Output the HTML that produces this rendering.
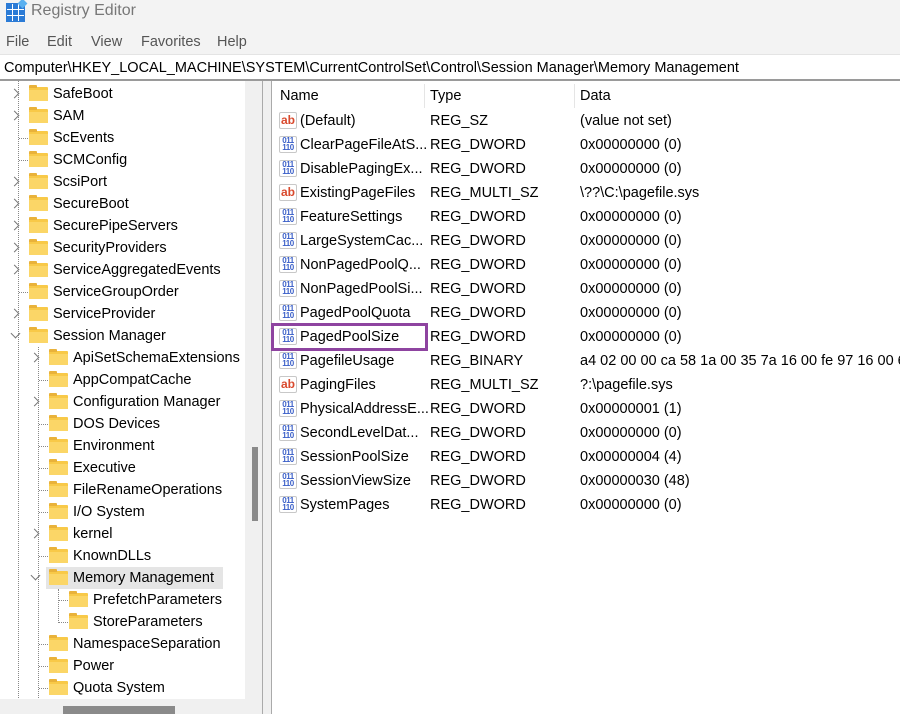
<!DOCTYPE html>
<html><head><meta charset="utf-8"><style>
*{margin:0;padding:0;box-sizing:border-box}
body{width:900px;height:714px;overflow:hidden;background:#fff;font-family:"Liberation Sans",sans-serif;font-size:14.5px;color:#000;position:relative}
.a{position:absolute;white-space:nowrap}
.title{left:0;top:0;width:900px;height:28px;background:#f3f3f3}
.menu{left:0;top:28px;width:900px;height:26px;background:#f3f3f3}
.addr{left:0;top:54px;width:900px;height:25px;background:#fff;border-top:1px solid #e4e4e4}
.fold{position:absolute;width:19px;height:14px;background:#f8c948;border-radius:1px}
.fold:before{content:"";position:absolute;left:0;top:-2px;width:8px;height:3px;background:#e9b23a;border-radius:1px 1px 0 0}
.fold:after{content:"";position:absolute;left:0;top:3px;width:19px;height:11px;background:#fbd667}
.chev{position:absolute;width:7px;height:7px;border-right:1.5px solid #777;border-bottom:1.5px solid #777;transform:rotate(-45deg)}
.chevd{transform:rotate(45deg)}
.ic{position:absolute;width:18px;height:17px;border:1px solid #c8c8c8;border-radius:2px;background:#fff}
.ab{color:#d94a2e;font-weight:bold;font-size:12px;line-height:14px;text-align:center}
.bin{color:#3a5fc8;font-weight:bold;font-size:8px;line-height:7px;text-align:center;padding-top:0;letter-spacing:-0.5px}
.dv{position:absolute;border-left:1px dotted #888}
.dh{position:absolute;border-top:1px dotted #888;height:0}
</style></head><body>
<div class="a title"></div>
<div class="a" style="left:6px;top:3px;width:19px;height:19px;background:#2b7bd6"></div>
<div class="a" style="left:7px;top:4px;width:17px;height:17px;background:linear-gradient(90deg,transparent 5px,#fff 5px,#fff 6px,transparent 6px,transparent 11px,#fff 11px,#fff 12px,transparent 12px),linear-gradient(0deg,transparent 5px,#fff 5px,#fff 6px,transparent 6px,transparent 11px,#fff 11px,#fff 12px,transparent 12px)"></div>
<div class="a" style="left:19px;top:0;width:7px;height:7px;background:#5ab0f0;transform:rotate(45deg)"></div>
<div class="a" style="left:31px;top:2px;font-size:16px;color:#777">Registry Editor</div>
<div class="a menu"></div>
<div class="a" style="left:6px;top:34px;color:#555">File</div>
<div class="a" style="left:47px;top:34px;color:#555">Edit</div>
<div class="a" style="left:91px;top:34px;color:#555">View</div>
<div class="a" style="left:141px;top:34px;color:#555">Favorites</div>
<div class="a" style="left:217px;top:34px;color:#555">Help</div>
<div class="a addr"></div>
<div class="a" style="left:4px;top:60px">Computer\HKEY_LOCAL_MACHINE\SYSTEM\CurrentControlSet\Control\Session Manager\Memory Management</div>
<div class="a" style="left:0;top:79px;width:900px;height:2px;background:#9a9a9a"></div>
<div class="a" style="left:245px;top:81px;width:17px;height:633px;background:#f0f0f0"></div>
<div class="a" style="left:252px;top:447px;width:6px;height:74px;background:#8a8a8a"></div>
<div class="a" style="left:0;top:699px;width:245px;height:15px;background:#f0f0f0"></div>
<div class="a" style="left:63px;top:706px;width:112px;height:8px;background:#8a8a8a"></div>
<div class="a" style="left:262px;top:81px;width:10px;height:633px;background:#f0f0f0;border-left:1px solid #aaa;border-right:1px solid #aaa"></div>
<div class="dv" style="left:18px;top:81px;height:617px"></div>
<div class="dv" style="left:38px;top:347px;height:351px"></div>
<div class="dv" style="left:58px;top:589px;height:34px"></div>
<div class="a" style="left:46px;top:567px;width:177px;height:22px;background:#e5e5e5"></div>
<div id="tree"></div>
<div class="a" style="left:424px;top:84px;width:1px;height:24px;background:#e5e5e5"></div>
<div class="a" style="left:574px;top:84px;width:1px;height:24px;background:#e5e5e5"></div>
<div class="a" style="left:280px;top:88px">Name</div>
<div class="a" style="left:430px;top:88px">Type</div>
<div class="a" style="left:580px;top:88px">Data</div>
<div id="list"></div>
<div class="a" style="left:271px;top:323px;width:157px;height:28px;border:3px solid #8e44a0"></div>
<script>
var t=[["SafeBoot",1,1],["SAM",1,1],["ScEvents",1,0],["SCMConfig",1,0],["ScsiPort",1,1],["SecureBoot",1,1],["SecurePipeServers",1,1],["SecurityProviders",1,1],["ServiceAggregatedEvents",1,1],["ServiceGroupOrder",1,0],["ServiceProvider",1,1],["Session Manager",1,2],["ApiSetSchemaExtensions",2,1],["AppCompatCache",2,0],["Configuration Manager",2,1],["DOS Devices",2,0],["Environment",2,0],["Executive",2,0],["FileRenameOperations",2,0],["I/O System",2,0],["kernel",2,1],["KnownDLLs",2,0],["Memory Management",2,2],["PrefetchParameters",3,0],["StoreParameters",3,0],["NamespaceSeparation",2,0],["Power",2,0],["Quota System",2,0]];
var h="";
t.forEach(function(r,i){var y=83+i*22,l=r[1],fx=9+l*20,tx=13+l*20+20;
if(r[2]==1)h+='<div class="chev" style="left:'+(fx-18)+'px;top:'+(y+7)+'px"></div>';
else if(r[2]==2)h+='<div class="chev chevd" style="left:'+(fx-17)+'px;top:'+(y+5)+'px"></div>';
else h+='<div class="dh" style="left:'+(fx-10)+'px;top:'+(y+11)+'px;width:9px"></div>';
h+='<div class="fold" style="left:'+fx+'px;top:'+(y+4)+'px"></div>';
h+='<div class="a" style="left:'+tx+'px;top:'+(y+3)+'px">'+r[0]+'</div>';});
document.getElementById("tree").innerHTML=h;
var L=[["(Default)",0,"REG_SZ","(value not set)"],["ClearPageFileAtS...",1,"REG_DWORD","0x00000000 (0)"],["DisablePagingEx...",1,"REG_DWORD","0x00000000 (0)"],["ExistingPageFiles",0,"REG_MULTI_SZ","\\??\\C:\\pagefile.sys"],["FeatureSettings",1,"REG_DWORD","0x00000000 (0)"],["LargeSystemCac...",1,"REG_DWORD","0x00000000 (0)"],["NonPagedPoolQ...",1,"REG_DWORD","0x00000000 (0)"],["NonPagedPoolSi...",1,"REG_DWORD","0x00000000 (0)"],["PagedPoolQuota",1,"REG_DWORD","0x00000000 (0)"],["PagedPoolSize",1,"REG_DWORD","0x00000000 (0)"],["PagefileUsage",1,"REG_BINARY","a4 02 00 00 ca 58 1a 00 35 7a 16 00 fe 97 16 00 6"],["PagingFiles",0,"REG_MULTI_SZ","?:\\pagefile.sys"],["PhysicalAddressE...",1,"REG_DWORD","0x00000001 (1)"],["SecondLevelDat...",1,"REG_DWORD","0x00000000 (0)"],["SessionPoolSize",1,"REG_DWORD","0x00000004 (4)"],["SessionViewSize",1,"REG_DWORD","0x00000030 (48)"],["SystemPages",1,"REG_DWORD","0x00000000 (0)"]];
h="";
L.forEach(function(r,i){var y=109+i*24;
h+=r[1]?'<div class="ic bin" style="left:279px;top:'+(y+3)+'px">011<br>110</div>':'<div class="ic ab" style="left:279px;top:'+(y+3)+'px">ab</div>';
h+='<div class="a" style="left:300px;top:'+(y+4)+'px">'+r[0]+'</div>';
h+='<div class="a" style="left:430px;top:'+(y+4)+'px">'+r[2]+'</div>';
h+='<div class="a" style="left:580px;top:'+(y+4)+'px">'+r[3]+'</div>';});
document.getElementById("list").innerHTML=h;
</script>
</body></html>
